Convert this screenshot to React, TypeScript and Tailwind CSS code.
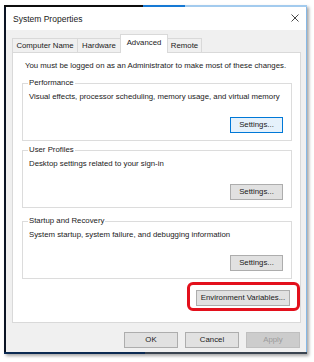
const font = { fontFamily: '"Liberation Sans", Arial, sans-serif' };

function Btn({
  label,
  width = "w-[53px]",
  focused = false,
  disabled = false,
}: {
  label: string;
  width?: string;
  focused?: boolean;
  disabled?: boolean;
}) {
  const tone = disabled
    ? "bg-[#cccccc] border-[#bfbfbf] text-[#9b9b9b]"
    : focused
    ? "bg-[#e5f1fb] border-[#0078d7] text-[#1a1a1a]"
    : "bg-[#e1e1e1] border-[#adadad] text-[#1a1a1a]";
  return (
    <div
      className={`${width} h-[16px] border ${tone} flex items-center justify-center text-[7.8px] leading-[10px]`}
    >
      {label}
    </div>
  );
}

function Group({
  title,
  desc,
  focused = false,
  className = "",
}: {
  title: string;
  desc: string;
  focused?: boolean;
  className?: string;
}) {
  return (
    <div className={`mr-[8px] h-[58px] border border-[#dcdcdc] pl-[6px] pr-[8px] flex flex-col ${className}`}>
      <span className="-mt-[6px] -ml-[1px] w-fit bg-white px-[1px] text-[7.8px] leading-[10px] text-[#1a1a1a]">
        {title}
      </span>
      <div className="mt-[4px] text-[7.8px] leading-[10px] text-[#1a1a1a]">{desc}</div>
      <div className="mt-[15px] flex justify-end">
        <Btn label="Settings..." focused={focused} />
      </div>
    </div>
  );
}

const tabs = [
  { name: "Computer Name", w: "w-[66px]" },
  { name: "Hardware", w: "w-[44px]" },
  { name: "Advanced", w: "w-[48px]", active: true },
  { name: "Remote", w: "w-[35px]" },
];

export default function App() {
  return (
    <div className="w-[314px] h-[362px] bg-white pt-[5px] pl-[4px] overflow-hidden" style={font}>
      <div className="w-[303px] h-[349px] flex flex-col shadow-[2px_2px_3px_rgba(0,0,0,0.35)]">
        <div className="h-[2px] flex">
          <div className="w-[139px] bg-[#0d0d0d]" />
          <div className="w-[42px] bg-[#1679d4]" />
          <div className="flex-1 bg-[#a3cbee]" />
        </div>
        <div className="flex-1 flex">
          <div className="w-[2px] bg-[#0b1424]" />
          <div className="flex-1 flex flex-col border-r border-[#86b8e6] bg-[#f0f0f0]">
            <div className="h-[23px] bg-white flex items-center justify-between pl-[7px] pr-[7px]">
              <span className="text-[8.5px] leading-[10px] text-[#1a1a1a]">System Properties</span>
              <svg width="8" height="8" viewBox="0 0 8 8" className="mt-[-1px]">
                <path d="M0.5 0.5 L7.5 7.5 M7.5 0.5 L0.5 7.5" stroke="#333" strokeWidth="0.9" fill="none" />
              </svg>
            </div>
            <div className="flex-1 flex flex-col pt-[4px] pl-[6px] pr-[5px] pb-[4px]">
              <div className="flex items-end h-[18px]">
                {tabs.map((t, i) =>
                  t.active ? (
                    <div
                      key={t.name}
                      className={`${t.w} -ml-px h-[19px] -mb-px relative z-10 bg-white border border-b-0 border-[#d9d9d9] flex items-center justify-center pb-[2px] text-[7.8px] leading-[10px] text-[#1a1a1a]`}
                    >
                      {t.name}
                    </div>
                  ) : (
                    <div
                      key={t.name}
                      className={`${t.w} ${i > 0 ? "-ml-px" : ""} h-[14px] bg-[#f0f0f0] border border-b-0 border-[#d9d9d9] flex items-center justify-center text-[7.8px] leading-[10px] text-[#1a1a1a]`}
                    >
                      {t.name}
                    </div>
                  )
                )}
              </div>
              <div className="h-[271px] bg-white border border-[#d9d9d9] pt-[8px] pl-[9px] flex flex-col">
                <div className="pl-[3px] text-[7.8px] leading-[10px] text-[#1a1a1a]">
                  You must be logged on as an Administrator to make most of these changes.
                </div>
                <Group
                  className="mt-[12px]"
                  title="Performance"
                  desc="Visual effects, processor scheduling, memory usage, and virtual memory"
                  focused
                />
                <Group className="mt-[9px]" title="User Profiles" desc="Desktop settings related to your sign-in" />
                <Group
                  className="mt-[13px]"
                  title="Startup and Recovery"
                  desc="System startup, system failure, and debugging information"
                />
                <div className="mt-[3px] flex justify-end">
                  <div className="border-[3px] border-[#e3101c] rounded-[6px] pt-[5px] pb-[2px] pl-[6px] pr-[7px]">
                    <Btn label="Environment Variables..." width="w-[94px]" />
                  </div>
                </div>
              </div>
              <div className="mt-[9px] flex justify-end gap-[7px] pr-[1px]">
                <Btn label="OK" width="w-[54px]" />
                <Btn label="Cancel" width="w-[54px]" />
                <Btn label="Apply" width="w-[54px]" disabled />
              </div>
            </div>
          </div>
        </div>
        <div className="h-[2px] flex">
          <div className="w-[141px] bg-[#0b2a52]" />
          <div className="flex-1 bg-[#3a4450]" />
        </div>
      </div>
    </div>
  );
}
